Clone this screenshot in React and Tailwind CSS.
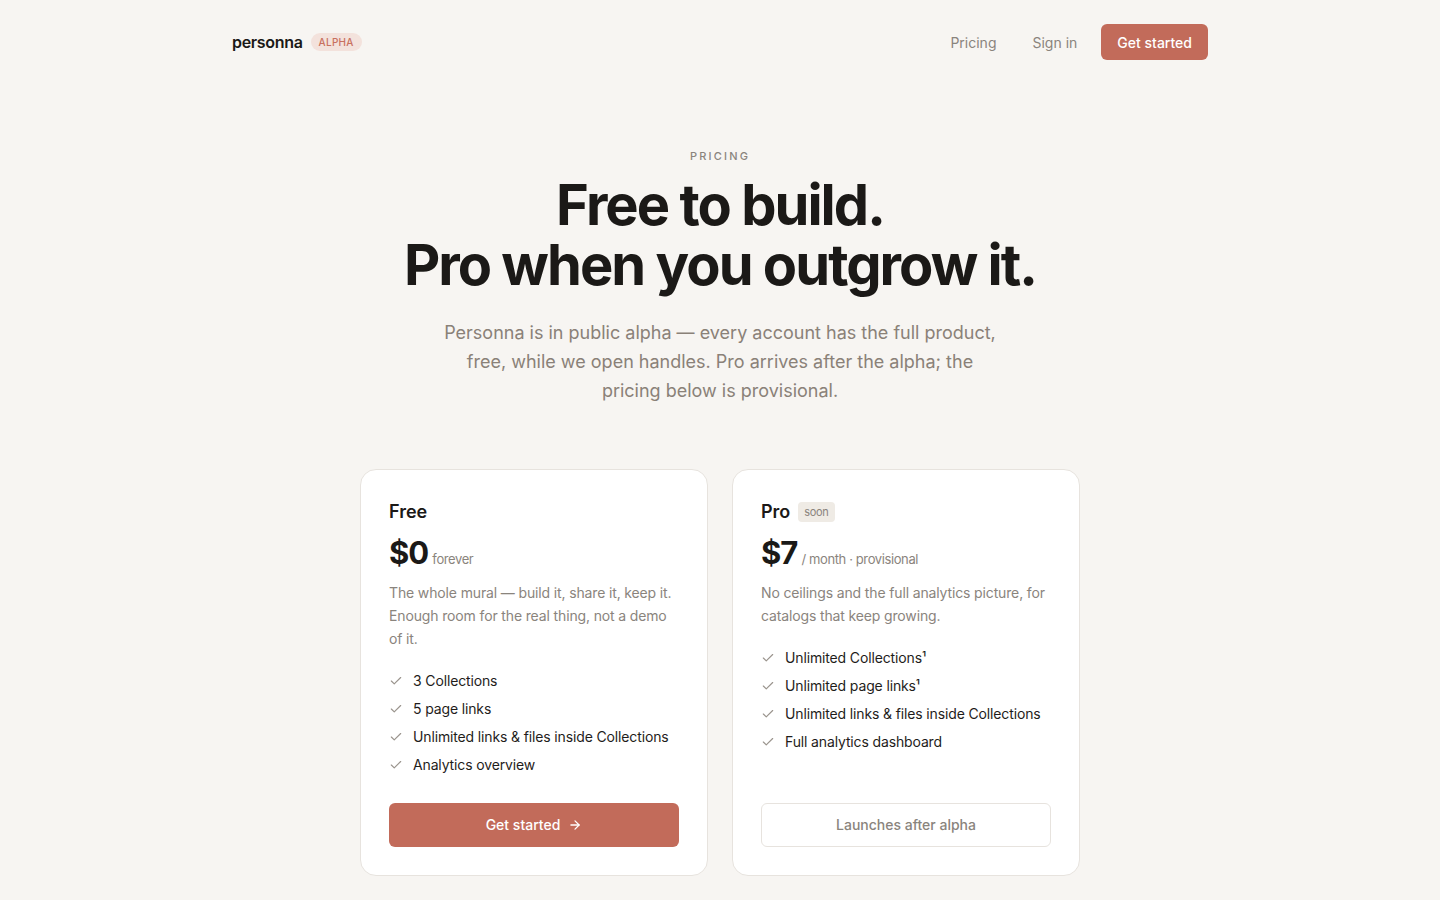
import React from 'react';

const Check = () => (
  <svg className="w-[14px] h-[14px] shrink-0 text-[#9a948d]" viewBox="0 0 24 24" fill="none" stroke="currentColor" strokeWidth="2" strokeLinecap="round" strokeLinejoin="round">
    <path d="M20 6 9 17l-5-5" />
  </svg>
);

const Arrow = () => (
  <svg className="w-[14px] h-[14px]" viewBox="0 0 24 24" fill="none" stroke="currentColor" strokeWidth="2.2" strokeLinecap="round" strokeLinejoin="round">
    <path d="M5 12h14" />
    <path d="m12 5 7 7-7 7" />
  </svg>
);

const Feature = ({ children }) => (
  <li className="flex items-center gap-[10px] h-[28px] text-[14px] tracking-[-0.01em] text-[#1f1d1b]">
    <Check />
    <span>{children}</span>
  </li>
);

export default function App() {
  return (
    <div className="min-h-screen bg-[#f7f5f2] font-['Inter',sans-serif] antialiased">
      <header className="max-w-[976px] mx-auto flex items-center justify-between pt-6">
        <div className="flex items-center gap-2">
          <span className="text-[16px] font-semibold text-[#1b1917] tracking-[-0.02em]">personna</span>
          <span className="rounded-full bg-[#f3e2dc] px-2 py-[4px] text-[10px] font-medium tracking-[0.03em] text-[#c8705f] leading-none">ALPHA</span>
        </div>
        <nav className="flex items-center gap-9 text-[14px]">
          <a className="text-[#8a847d]">Pricing</a>
          <a className="text-[#8a847d]">Sign in</a>
          <a className="-ml-3 rounded-md bg-[#c26b5a] px-4 h-9 flex items-center text-white font-medium">Get started</a>
        </nav>
      </header>

      <section className="flex flex-col items-center text-center pt-[88px]">
        <p className="text-[11px] tracking-[0.2em] text-[#8a847d] font-medium">PRICING</p>
        <h1 className="mt-[10px] text-[56px] leading-[60px] font-bold tracking-[-0.035em] text-[#1b1917]">
          Free to build.<br />Pro when you outgrow it.
        </h1>
        <p className="mt-[23px] max-w-[570px] text-[18px] leading-[29px] text-[#8a8178]">
          Personna is in public alpha — every account has the full product, free, while we open handles. Pro arrives after the alpha; the pricing below is provisional.
        </p>
      </section>

      <section className="max-w-[720px] mx-auto grid grid-cols-2 gap-6 mt-[64px] pb-6">
        <div className="flex flex-col rounded-2xl border border-[#e7e3de] bg-white px-7 pt-[30px] pb-7">
          <h3 className="text-[18px] font-semibold text-[#1b1917] leading-6">Free</h3>
          <div className="mt-[11px] flex items-baseline gap-1">
            <span className="text-[31px] font-bold tracking-[-0.03em] text-[#1b1917] leading-9">$0</span>
            <span className="text-[13px] text-[#8a847d] tracking-[-0.03em]">forever</span>
          </div>
          <p className="mt-[10px] text-[14px] leading-[23px] tracking-[-0.01em] text-[#8a847d]">
            The whole mural — build it, share it, keep it. Enough room for the real thing, not a demo of it.
          </p>
          <ul className="mt-[17px]">
            <Feature>3 Collections</Feature>
            <Feature>5 page links</Feature>
            <Feature>Unlimited links &amp; files inside Collections</Feature>
            <Feature>Analytics overview</Feature>
          </ul>
          <div className="mt-auto pt-6">
            <button className="w-full h-11 rounded-md bg-[#c26b5a] text-white text-[14px] font-medium flex items-center justify-center gap-2">
              Get started <Arrow />
            </button>
          </div>
        </div>

        <div className="flex flex-col rounded-2xl border border-[#e7e3de] bg-white px-7 pt-[30px] pb-7">
          <div className="flex items-center gap-2">
            <h3 className="text-[18px] font-semibold text-[#1b1917] leading-6">Pro</h3>
            <span className="rounded bg-[#efebe5] px-[6px] py-[3px] text-[11px] leading-[14px] text-[#8a847d] tracking-[-0.03em]">soon</span>
          </div>
          <div className="mt-[11px] flex items-baseline gap-1">
            <span className="text-[31px] font-bold tracking-[-0.03em] text-[#1b1917] leading-9">$7</span>
            <span className="text-[13px] text-[#8a847d] tracking-[-0.03em]">/ month · provisional</span>
          </div>
          <p className="mt-[10px] text-[14px] leading-[23px] tracking-[-0.01em] text-[#8a847d]">
            No ceilings and the full analytics picture, for catalogs that keep growing.
          </p>
          <ul className="mt-[17px]">
            <Feature>Unlimited Collections¹</Feature>
            <Feature>Unlimited page links¹</Feature>
            <Feature>Unlimited links &amp; files inside Collections</Feature>
            <Feature>Full analytics dashboard</Feature>
          </ul>
          <div className="mt-auto pt-6">
            <button className="w-full h-11 rounded-md border border-[#e7e3de] bg-white text-[#8a847d] text-[14px] font-medium">
              Launches after alpha
            </button>
          </div>
        </div>
      </section>
    </div>
  );
}
